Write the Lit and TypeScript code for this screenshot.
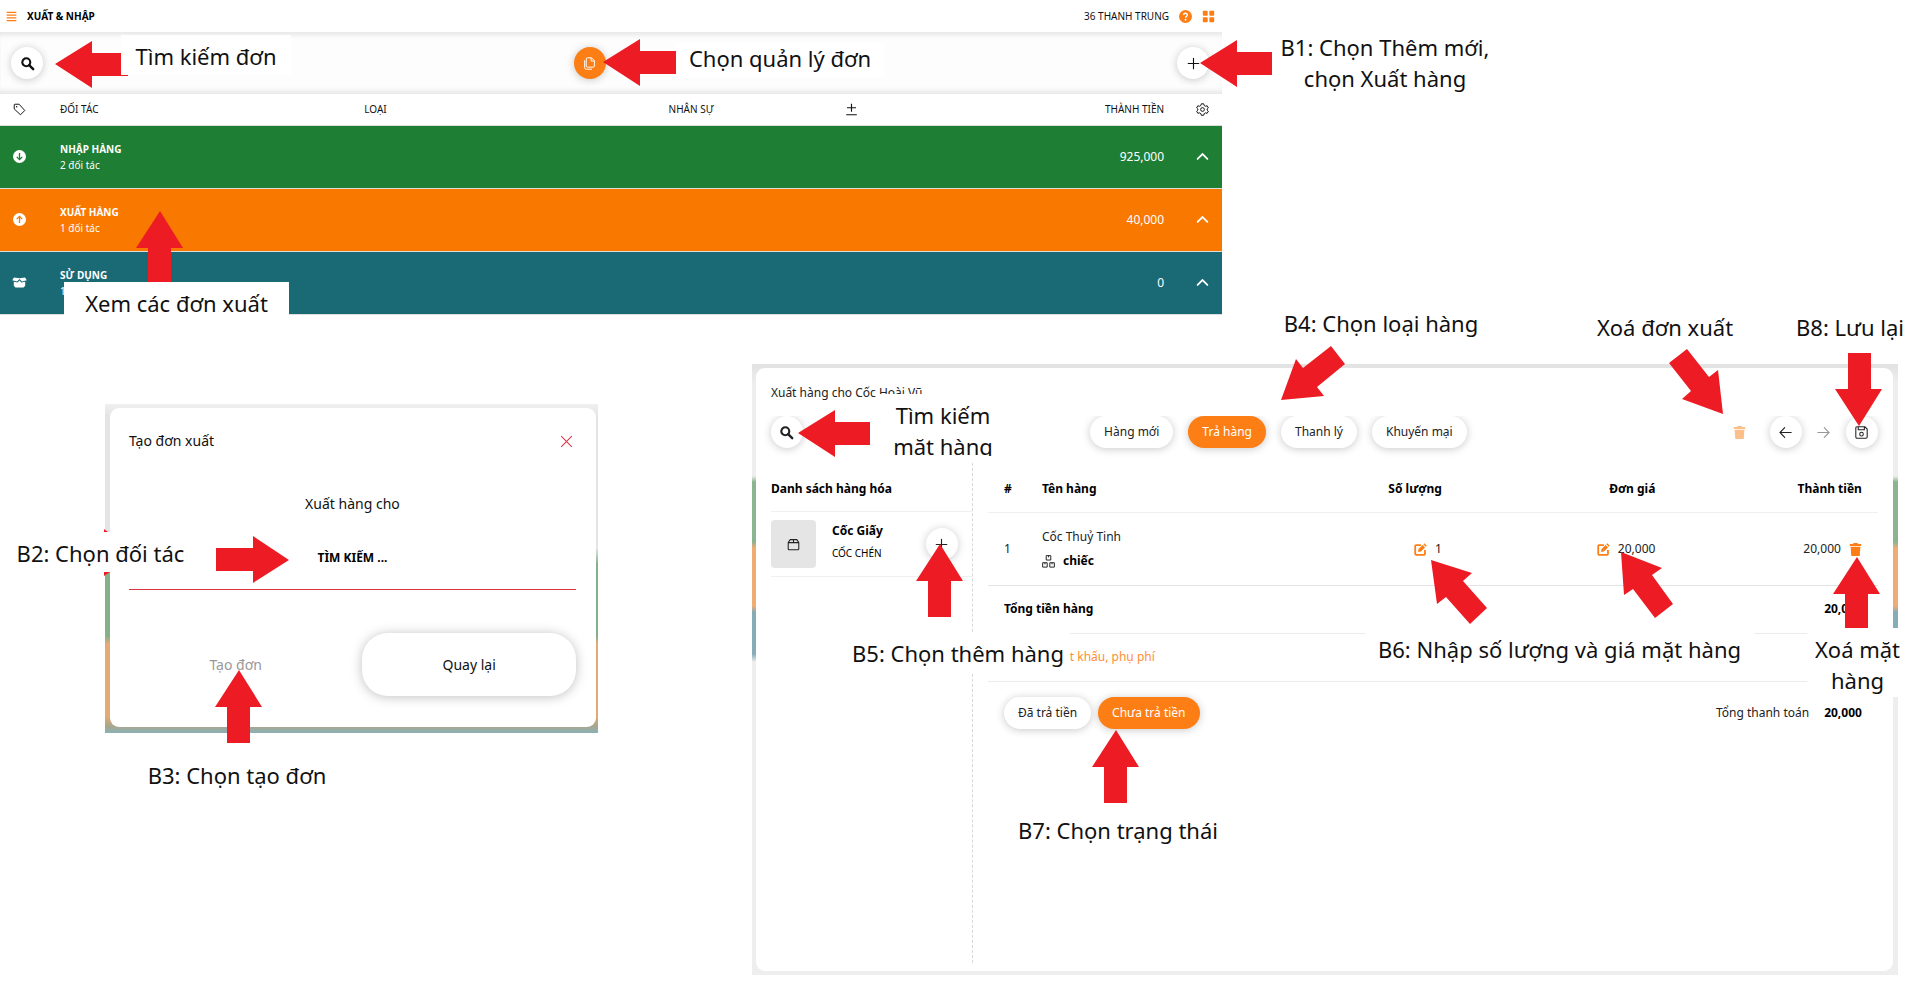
import { LitElement, html, svg, css } from "lit";
import { customElement, property } from "lit/decorators.js";

/* Width of the drawing grid on which notes and arrows are laid out. */
const GRID = 1908;
const pct = (x: number) => `${(x / GRID) * 100}%`;

const ICONS: Record<string, unknown> = {
  menu: svg`<path d="M1 2h14M1 6h14M1 10h14M1 14h14" fill="none" stroke="currentColor" stroke-width="1.800"/>`,
  help: svg`<circle cx="8" cy="8" r="8" fill="currentColor"/><path d="M5.700 6.200a2.300 2.100 0 1 1 3.500 1.700c-.8.500-1.200.8-1.200 1.700" fill="none" stroke="#fff" stroke-width="1.700"/><circle cx="8" cy="12" r="1.100" fill="#fff"/>`,
  apps: svg`<rect x="1" y="1" width="6" height="6" rx="1"/><rect x="9" y="1" width="6" height="6" rx="1"/><rect x="1" y="9" width="6" height="6" rx="1"/><rect x="9" y="9" width="6" height="6" rx="1"/>`,
  search: svg`<circle cx="6.500" cy="6.500" r="4.900" fill="none" stroke="currentColor" stroke-width="2.600"/><path d="M10 10l5 5" stroke="currentColor" stroke-width="3" stroke-linecap="round"/>`,
  files: svg`<path d="M5.500 1h5L14 4.500V11a1.500 1.500 0 0 1-1.500 1.500h-7A1.500 1.500 0 0 1 4 11V2.500A1.500 1.500 0 0 1 5.500 1zM10 1v4h4M2 4v9a2 2 0 0 0 2 2h7" fill="none" stroke="currentColor" stroke-width="1.200"/>`,
  plus: svg`<path d="M8 1.500v13M1.500 8h13" stroke="currentColor" stroke-width="1.400" stroke-linecap="round"/>`,
  tag: svg`<path d="M1.500 2.500v4.800l7.700 7.200 5.300-5.300L7.500 1.500h-5a1 1 0 0 0-1 1z" fill="none" stroke="currentColor" stroke-width="1.200" stroke-linejoin="round"/><circle cx="4.500" cy="4.500" r=".9" fill="currentColor"/>`,
  plusminus: svg`<path d="M8 .8v10M2.500 5.800h11M1.500 14.500h13" stroke="currentColor" stroke-width="1.400"/>`,
  gear: svg`<circle cx="8" cy="8" r="2.300" fill="none" stroke="currentColor" stroke-width="1.200"/><path d="M6.500 1h3l.5 2 1.700 1 2-.6 1.500 2.600L13.700 7.400v1.300l1.500 1.400-1.500 2.600-2-.6-1.700 1-.5 2h-3l-.5-2-1.700-1-2 .6L.8 10.100l1.500-1.400V7.400L.8 6l1.500-2.600 2 .6L6 3z" fill="none" stroke="currentColor" stroke-width="1.200" stroke-linejoin="round"/>`,
  down: svg`<circle cx="8" cy="8" r="8" fill="currentColor"/><path d="M8 3.800v8M4.600 8.500L8 11.900l3.400-3.400" fill="none" stroke="var(--row)" stroke-width="1.600"/>`,
  up: svg`<circle cx="8" cy="8" r="8" fill="currentColor"/><path d="M8 12.200v-8M4.600 7.500L8 4.100l3.400 3.400" fill="none" stroke="var(--row)" stroke-width="1.600"/>`,
  box: svg`<path d="M1.200 1.700L8 2.700l6.800-1L17 5.200l-6 1.600L8 3.700 5 6.800-1 5.200zM1 7l4.700 1.100L8 5.500l2.300 2.600L15 7v5l-2 2.300H3L1 12z" fill="currentColor"/>`,
  chevron: svg`<path d="M2 11l6-6 6 6" fill="none" stroke="currentColor" stroke-width="2.200" stroke-linecap="round"/>`,
  close: svg`<path d="M1.500 1.500l13 13M14.500 1.500l-13 13" stroke="currentColor" stroke-width="1.300"/>`,
  trash: svg`<path d="M5.500 0h5l.6 1.200H15v2.400H1V1.200h3.900zM2 4.600h12L13.200 16H2.800z" fill="currentColor"/>`,
  back: svg`<path d="M15 8H1.500M7 2L1.200 8 7 14" fill="none" stroke="currentColor" stroke-width="1.400" stroke-linecap="round"/>`,
  forward: svg`<path d="M1 8h13.500M9 2l5.800 6L9 14" fill="none" stroke="currentColor" stroke-width="1.400" stroke-linecap="round"/>`,
  save: svg`<path d="M2.500 1h9.700L15 3.800v9.700a1.500 1.500 0 0 1-1.500 1.500h-11A1.500 1.500 0 0 1 1 13.500v-11A1.500 1.500 0 0 1 2.500 1zM4 1v3.700h7.500V1" fill="none" stroke="currentColor" stroke-width="1.300"/><circle cx="8" cy="10" r="2.200" fill="none" stroke="currentColor" stroke-width="1.300"/>`,
  edit: svg`<path d="M8.500 2.500H2.500a1 1 0 0 0-1 1v10a1 1 0 0 0 1 1h10a1 1 0 0 0 1-1V8.500" fill="none" stroke="currentColor" stroke-width="2.200"/><path d="M12.700.3l3 3-1.300 1.300-3-3zM10.600 2.400l3 3L8.500 10.500 5 11.200l.6-3.700z" fill="currentColor"/>`,
  parcel: svg`<path d="M1.500 5.500L4 2h8l2.500 3.500v8a1 1 0 0 1-1 1h-11a1 1 0 0 1-1-1zM1.500 5.700h13M8 2v3.700" fill="none" stroke="currentColor" stroke-width="1.300"/>`,
  boxes: svg`<path d="M5.200.8h5.600v5.400H5.200zM.8 9.500h5.600v5.400H.8zM9.600 9.500h5.600v5.400H9.600zM8 .8v2M3.600 9.500v2M12.400 9.500v2" fill="none" stroke="currentColor" stroke-width="1.200"/>`,
};

@customElement("ui-icon")
class UiIcon extends LitElement {
  @property() name = "";
  static styles = css`
    :host { display: inline-flex; width: 13px; height: 13px; flex: none; }
    svg { width: 100%; height: 100%; display: block; fill: currentColor; overflow: visible; }
  `;
  render() {
    return html`<svg viewBox="0 0 16 16" aria-hidden="true">${ICONS[this.name]}</svg>`;
  }
}

/* Controls shared by the three windows. */
const controls = css`
  :host, * { box-sizing: border-box; }
  button, input, a { font: inherit; color: inherit; }
  button { border: 0; background: none; padding: 0; cursor: pointer; display: inline-flex; align-items: center; justify-content: center; }
  button:disabled { cursor: default; }
  .round, .pill { height: 32px; background: #fff; border-radius: 16px; box-shadow: 0 1px 8px rgba(0, 0, 0, 0.22); white-space: nowrap; }
  .round { width: 32px; }
  .pill { padding: 0 14px; }
  .active { background: #fd7e14; color: #fff; }
  .flat { background: none; box-shadow: none; }
  .orange { color: #fd7e14; }
  table { width: 100%; border-collapse: collapse; table-layout: fixed; }
  th, td { padding: 0; text-align: left; }
  .right { text-align: right; }
`;

const GROUPS = [
  { name: "NHẬP HÀNG", sub: "2 đối tác", total: "925,000", icon: "down", color: "#1e7e34" },
  { name: "XUẤT HÀNG", sub: "1 đối tác", total: "40,000", icon: "up", color: "#f97800" },
  { name: "SỬ DỤNG", sub: "1 đối tác", total: "0", icon: "box", color: "#1a6a76" },
];

@customElement("order-list")
class OrderList extends LitElement {
  static styles = [controls, css`
    :host { display: block; background: #fff; font-size: 10px; line-height: 16px; color: #111; }
    .top { height: 32px; display: flex; align-items: center; padding: 0 7px 0 6px; gap: 10px; }
    .top h1 { font-size: 10px; margin: 0 auto 0 0; color: #000; }
    .top ui-icon.menu { width: 11px; }
    .bar { height: 62px; display: flex; align-items: center; justify-content: space-between; padding: 0 13px 0 11px;
      background: #fdfdfd; box-shadow: inset 0 6px 5px -3px #e6e6e6, inset 0 -6px 5px -3px #e6e6e6; }
    .modes { padding-right: 41px; display: flex; }
    th { height: 31px; font-weight: 400; border-bottom: 1px solid #ddd; }
    th ui-icon, td ui-icon { display: block; }
    .mark { width: 60px; padding-left: 13px; }
    .quarter { width: 24.9%; }
    .staff { width: 14.4%; }
    .sign { width: 6%; }
    .more { width: 58px; padding-left: 32px; }
    td { height: 63px; background: var(--row); color: #fff; border-bottom: 1px solid #ddd; }
    td b { display: block; }
    .sum { font-size: 12px; }
  `];
  render() {
    return html`
      <header class="top">
        <ui-icon class="orange menu" name="menu"></ui-icon>
        <h1>XUẤT &amp; NHẬP</h1>
        <span>36 THANH TRUNG</span>
        <ui-icon class="orange" name="help"></ui-icon>
        <ui-icon class="orange" name="apps"></ui-icon>
      </header>
      <div class="bar">
        <button class="round" aria-label="Tìm kiếm"><ui-icon name="search"></ui-icon></button>
        <div class="modes"><button class="round active" aria-label="Quản lý đơn"><ui-icon name="files"></ui-icon></button></div>
        <button class="round" aria-label="Thêm mới"><ui-icon name="plus"></ui-icon></button>
      </div>
      <table>
        <thead><tr>
          <th class="mark"><ui-icon name="tag"></ui-icon></th>
          <th class="quarter">ĐỐI TÁC</th>
          <th class="quarter">LOẠI</th>
          <th class="staff">NHÂN SỰ</th>
          <th class="sign"><ui-icon name="plusminus"></ui-icon></th>
          <th class="right">THÀNH TIỀN</th>
          <th class="more"><ui-icon name="gear"></ui-icon></th>
        </tr></thead>
        <tbody>${GROUPS.map((g) => html`
          <tr style="--row:${g.color}">
            <td class="mark"><ui-icon name=${g.icon}></ui-icon></td>
            <td colspan="4"><b>${g.name}</b>${g.sub}</td>
            <td class="right sum">${g.total}</td>
            <td class="more"><ui-icon name="chevron"></ui-icon></td>
          </tr>`)}
        </tbody>
      </table>`;
  }
}

@customElement("create-dialog")
class CreateDialog extends LitElement {
  static styles = [controls, css`
    :host { display: block; padding: 4px 2px 6px 5px; font-size: 14px; line-height: 24px; color: #111;
      background: linear-gradient(#f0f0f0 0, #e4e4e4 12px, #e4e4e4 144px, #84b08c 160px, #84b08c 232px, #e5aa74 240px, #e5aa74 312px, #a9a68c 322px, #8fb0b2 328px); }
    .card { background: #fff; border-radius: 9px; padding: 17px 20px 31px 19px; }
    header { display: flex; align-items: center; justify-content: space-between; height: 32px; padding-right: 3px; }
    h2 { font: inherit; margin: 0; }
    .close { color: #dc3545; }
    label { display: block; text-align: center; margin-top: 35px; }
    input { display: block; width: 100%; height: 64px; margin-top: 10px; border: 0; border-bottom: 1px solid #dc3545; outline: 0;
      text-align: center; font-weight: 700; font-size: 12px; background: none; padding: 0; }
    input::placeholder { color: #000; opacity: 1; }
    .actions { display: grid; grid-template-columns: 1fr 1fr; gap: 20px; margin-top: 43px; }
    .actions button { height: 63px; border-radius: 26px; }
    .actions button:disabled { color: #999; }
    .actions .solid { box-shadow: 0 1px 12px rgba(0, 0, 0, 0.25); }
  `];
  render() {
    return html`<section class="card">
      <header><h2>Tạo đơn xuất</h2><button class="close" aria-label="Đóng"><ui-icon name="close"></ui-icon></button></header>
      <label for="partner">Xuất hàng cho</label>
      <input id="partner" type="text" placeholder="TÌM KIẾM ...">
      <div class="actions"><button disabled>Tạo đơn</button><button class="solid">Quay lại</button></div>
    </section>`;
  }
}

@customElement("order-editor")
class OrderEditor extends LitElement {
  static styles = [controls, css`
    :host { display: block; padding: 4px 5px 4px 4px; font-size: 12px; line-height: 24px; color: #222;
      background: linear-gradient(#e2e2e2 0, #eee 20px, #eee 112px, #8bb590 118px, #8bb590 178px, #efac75 184px, #efac75 242px, #86adb5 248px, #86adb5 290px, #eee 298px); }
    .card { background: #fff; border-radius: 9px; padding: 13px 15px 8px; }
    h2 { font: inherit; margin: 0 0 11px; }
    .tools { display: flex; align-items: center; clip-path: inset(0 -16px -16px -16px); }
    .find { margin-right: 30px; }
    .kinds { display: flex; gap: 15px; margin: 0 auto; }
    .acts { display: flex; gap: 6px; }
    .acts .remove { margin-right: 8px; color: #fdbf8a; }
    .acts .next { color: #999; }
    .body { display: grid; grid-template-columns: 202px 1fr; gap: 15px; margin-top: 15px; min-height: 500px; }
    .stock { border-right: 1px dashed #d8d8d8; }
    .stock h3 { margin: 0; font-size: 12px; height: 49px; line-height: 52px; border-bottom: 1px solid #f0f0f0; color: #000; }
    .item { display: flex; align-items: center; padding: 8px 14px 8px 0; border-bottom: 1px solid #f0f0f0; }
    .thumb { width: 45px; height: 48px; border-radius: 4px; background: #e5e5e5; display: grid; place-items: center; margin-right: 16px; }
    .item p { margin: 0 auto 0 0; padding-bottom: 4px; color: #000; font-size: 10px; line-height: 22px; }
    .item b { display: block; font-size: 12px; }
    th { height: 49px; padding-top: 3px; color: #000; border-bottom: 1px solid #f0f0f0; }
    .num { width: 54px; padding-left: 16px; }
    .qty { width: 110px; }
    .price { width: 24%; }
    .total { width: 25%; padding-right: 16px; }
    td { height: 73px; border-bottom: 1px solid #e4e4e4; }
    td ui-icon { vertical-align: middle; margin-right: 8px; }
    td.total ui-icon { margin: 0 0 0 8px; }
    .name b { color: #000; }
    .line { height: 48px; display: flex; align-items: center; justify-content: space-between; padding: 0 16px; border-bottom: 1px solid #ececec; color: #000; font-weight: 700; }
    .extra { padding-left: 57px; font-weight: 400; }
    .extra a { color: #fd8f35; text-decoration: none; }
    .pay { display: flex; align-items: center; gap: 7px; padding: 15px 16px; }
    .pay span { margin-left: auto; }
    .pay b { color: #000; margin-left: 8px; }
  `];
  render() {
    return html`<section class="card">
      <h2>Xuất hàng cho Cốc Hoài Vũ</h2>
      <div class="tools">
        <button class="round find" aria-label="Tìm kiếm"><ui-icon name="search"></ui-icon></button>
        <div class="kinds">
          ${["Hàng mới", "Trả hàng", "Thanh lý", "Khuyến mại"].map((k) => html`<button class="pill ${k === "Trả hàng" ? "active" : ""}">${k}</button>`)}
        </div>
        <div class="acts">
          <button class="round flat remove" aria-label="Xoá đơn"><ui-icon name="trash"></ui-icon></button>
          <button class="round" aria-label="Trước"><ui-icon name="back"></ui-icon></button>
          <button class="round flat next" aria-label="Sau" disabled><ui-icon name="forward"></ui-icon></button>
          <button class="round" aria-label="Lưu"><ui-icon name="save"></ui-icon></button>
        </div>
      </div>
      <div class="body">
        <aside class="stock">
          <h3>Danh sách hàng hóa</h3>
          <div class="item">
            <span class="thumb"><ui-icon name="parcel"></ui-icon></span>
            <p><b>Cốc Giấy</b>CỐC CHÉN</p>
            <button class="round" aria-label="Thêm Cốc Giấy"><ui-icon name="plus"></ui-icon></button>
          </div>
        </aside>
        <div>
          <table>
            <thead><tr><th class="num">#</th><th>Tên hàng</th><th class="qty right">Số lượng</th><th class="price right">Đơn giá</th><th class="total right">Thành tiền</th></tr></thead>
            <tbody><tr>
              <td class="num">1</td>
              <td class="name">Cốc Thuỷ Tinh<br><ui-icon name="boxes"></ui-icon><b>chiếc</b></td>
              <td class="qty right"><ui-icon class="orange" name="edit"></ui-icon>1</td>
              <td class="price right"><ui-icon class="orange" name="edit"></ui-icon>20,000</td>
              <td class="total right">20,000<ui-icon class="orange" name="trash"></ui-icon></td>
            </tr></tbody>
          </table>
          <div class="line"><span>Tổng tiền hàng</span><span>20,000</span></div>
          <div class="line extra"><a href="#extra">Chiết khấu, phụ phí</a></div>
          <div class="pay">
            <button class="pill">Đã trả tiền</button><button class="pill active">Chưa trả tiền</button>
            <span>Tổng thanh toán</span><b>20,000</b>
          </div>
        </div>
      </div>
    </section>`;
  }
}

/* A note on a white plate; a plate that covers part of a window has extra room above its text. */
interface Note { x: number; y: number; w: number; h: number; text: string[]; cover?: boolean; }
const NOTES: Note[] = [
  { x: 121, y: 35, w: 170, h: 40, text: ["Tìm kiếm đơn"], cover: true },
  { x: 676, y: 43, w: 208, h: 34, text: ["Chọn quản lý đơn"] },
  { x: 1275, y: 32, w: 220, h: 64, text: ["B1: Chọn Thêm mới,", "chọn Xuất hàng"] },
  { x: 64, y: 282, w: 225, h: 33, text: ["Xem các đơn xuất"], cover: true },
  { x: 0, y: 532, w: 201, h: 40, text: ["B2: Chọn đối tác"], cover: true },
  { x: 137, y: 760, w: 200, h: 34, text: ["B3: Chọn tạo đơn"] },
  { x: 1271, y: 308, w: 220, h: 34, text: ["B4: Chọn loại hàng"] },
  { x: 1585, y: 312, w: 160, h: 34, text: ["Xoá đơn xuất"] },
  { x: 1792, y: 312, w: 116, h: 34, text: ["B8: Lưu lại"] },
  { x: 876, y: 394, w: 134, h: 62, text: ["Tìm kiếm", "mặt hàng"], cover: true },
  { x: 846, y: 632, w: 224, h: 42, text: ["B5: Chọn thêm hàng"], cover: true },
  { x: 1365, y: 628, w: 389, h: 42, text: ["B6: Nhập số lượng và giá mặt hàng"], cover: true },
  { x: 1018, y: 815, w: 200, h: 34, text: ["B7: Chọn trạng thái"] },
  { x: 1807, y: 628, w: 101, h: 69, text: ["Xoá mặt", "hàng"], cover: true },
];

type Pt = [number, number];
const left = (x: number, y: number, end: number): Pt[] => [[x, y], [x + 37, y - 23], [x + 37, y - 11], [end, y - 11], [end, y + 12], [x + 37, y + 12], [x + 37, y + 24]];
const up = (x: number, y: number, end: number): Pt[] => [[x, y], [x + 23, y + 37], [x + 11, y + 37], [x + 11, end], [x - 12, end], [x - 12, y + 37], [x - 24, y + 37]];
const ARROWS: Pt[][] = [
  [...left(55, 64, 121).slice(0, 4), [121, 75], [128, 75], [128, 76], [92, 76], [92, 88]],
  left(603, 62, 676),
  left(1200, 63, 1272),
  left(798, 433, 870),
  up(160, 211, 282),
  up(239, 670, 743),
  up(940, 544, 617),
  up(1116, 730, 803),
  up(1857, 557, 628),
  [[289, 560], [253, 536], [253, 548], [216, 548], [216, 571], [253, 571], [253, 583]],
  [[1859, 426], [1835, 389], [1848, 389], [1848, 353], [1871, 353], [1871, 389], [1882, 389]],
  [[1281, 400], [1296, 359], [1303, 368], [1331, 346], [1345, 364], [1317, 387], [1324, 396]],
  [[1723, 414], [1718, 370], [1709, 377], [1687, 349], [1669, 363], [1691, 391], [1682, 399]],
  [[1431, 560], [1472, 573], [1463, 581], [1487, 608], [1470, 624], [1446, 597], [1437, 604]],
  [[1621, 552], [1662, 568], [1652, 575], [1673, 604], [1655, 618], [1633, 589], [1624, 595]],
  [[104, 529], [108, 532], [104, 532]],
  [[104, 572], [110, 572], [104, 576]],
];

@customElement("app-root")
class AppRoot extends LitElement {
  static styles = css`
    :host { display: block; font-family: "Noto Sans", "Open Sans", sans-serif; }
    .board { position: relative; min-height: 100vh; background: #fff; overflow: hidden; }
    order-list, create-dialog, order-editor, .note, .arrow { position: absolute; }
    order-list { left: 0; top: 0; width: 64.05%; }
    create-dialog { left: 5.5%; top: 404px; width: 25.84%; }
    order-editor { left: 39.41%; top: 364px; width: 60.06%; }
    .note { box-sizing: border-box; margin: 0; background: #fff; color: #111; font-size: 22px; line-height: 31px; text-align: center; white-space: nowrap;
      overflow: hidden; display: flex; flex-direction: column; align-items: center; }
    .cover { padding-top: 6px; }
    .arrow { overflow: visible; fill: #ed1c24; pointer-events: none; }
  `;
  private note(n: Note) {
    return html`<p class="note ${n.cover ? "cover" : ""}" style="left:${pct(n.x)};top:${n.y}px;width:${pct(n.w)};height:${n.h}px">${n.text.map((t) => html`<span>${t}</span>`)}</p>`;
  }
  private arrow(pts: Pt[]) {
    const x = Math.min(...pts.map((p) => p[0]));
    const y = Math.min(...pts.map((p) => p[1]));
    const w = Math.max(...pts.map((p) => p[0])) - x;
    const h = Math.max(...pts.map((p) => p[1])) - y;
    return html`<svg class="arrow" aria-hidden="true" width=${w} height=${h} style="left:${pct(x)};top:${y}px"><polygon points=${pts.map((p) => `${p[0] - x},${p[1] - y}`).join(" ")}></polygon></svg>`;
  }
  render() {
    return html`<main class="board">
      <order-list></order-list>
      <create-dialog></create-dialog>
      <order-editor></order-editor>
      ${NOTES.map((n) => this.note(n))}
      ${ARROWS.map((a) => this.arrow(a))}
    </main>`;
  }
}
